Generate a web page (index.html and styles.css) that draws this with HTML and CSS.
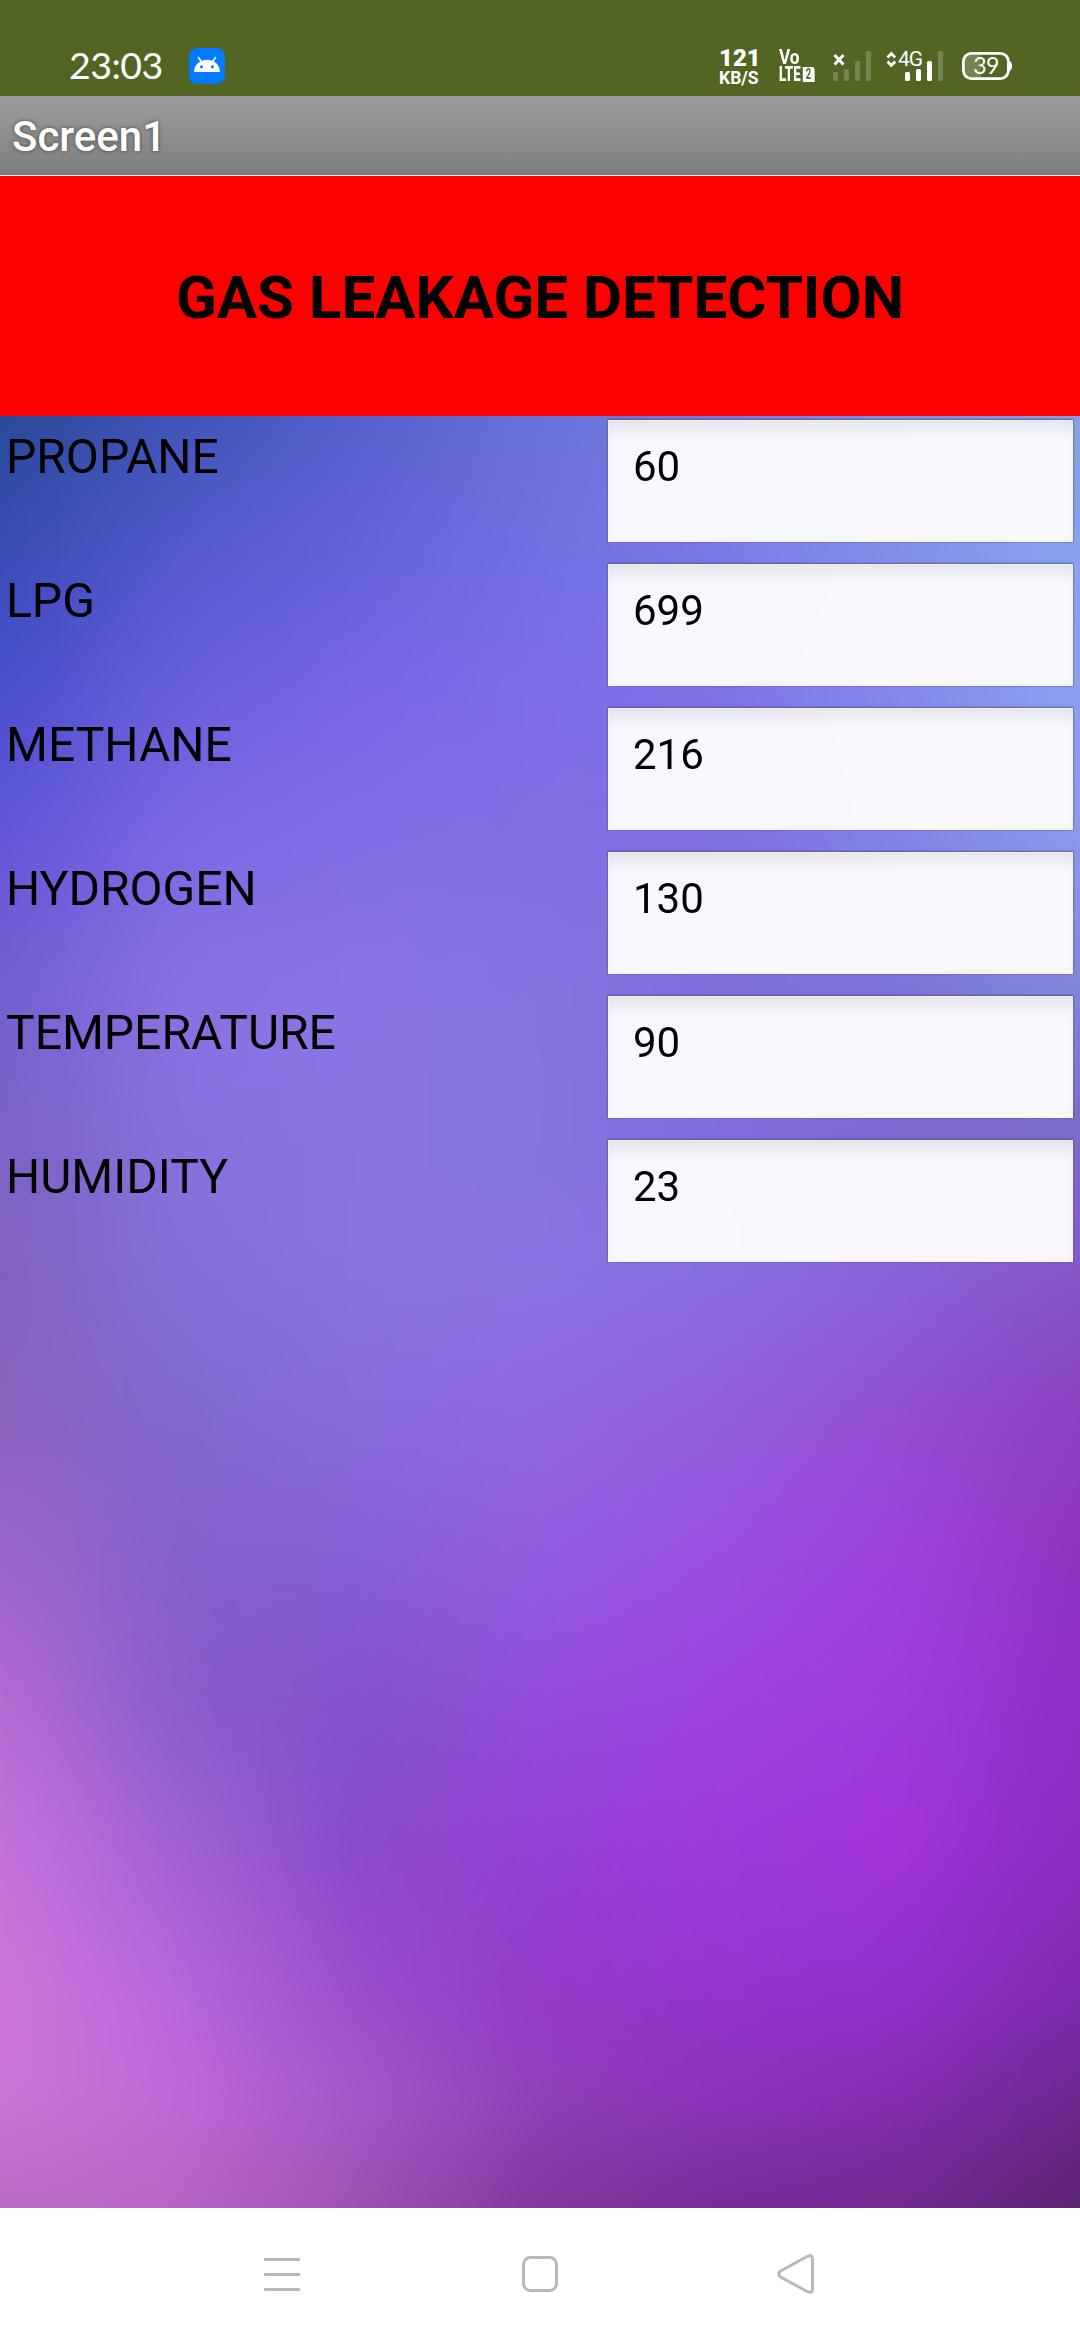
FILE: index.html
```html
<!DOCTYPE html>
<html lang="en">
<head>
<meta charset="utf-8">
<title>Screen1</title>
<link rel="stylesheet" href="styles.css">
</head>
<body>
<div class="phone">
  <header class="status">
    <span class="clock">23:03</span>
    <svg class="app-icon" width="36" height="36" viewBox="0 0 36 36">
      <rect width="36" height="36" rx="8.5" fill="#027bfd"/>
      <path d="M5 24a13 12.300 0 0 1 26 0z" fill="#fff"/>
      <path d="M9.500 9.500l4 6M26.500 9.500l-4 6" stroke="#fff" stroke-width="1.600" stroke-linecap="round"/>
      <circle cx="12.500" cy="18.800" r="1.500" fill="#027bfd"/><circle cx="23.500" cy="18.800" r="1.500" fill="#027bfd"/>
    </svg>
    <div class="speed"><b>121</b><span>KB/S</span></div>
    <div class="volte"><span>Vo</span><span>LTE<i>2</i></span></div>
    <svg class="sim1" width="38" height="32" viewBox="0 0 38 32">
      <g fill="#758551"><rect y="21" width="5" height="9" rx="1.500"/><rect x="11" y="18" width="5" height="12" rx="1.500"/><rect x="22" y="10" width="5" height="20" rx="1.500"/><rect x="33" width="5" height="30" rx="1.500"/></g>
      <path d="M1.500 4l9 9.500M10.500 4l-9 9.500" stroke="#fff" stroke-width="3"/>
    </svg>
    <div class="sim2">
      <svg width="57" height="32" viewBox="0 0 57 32">
        <path d="M1.500 6.500l3.800-4 3.800 4M1.500 10.500l3.800 4 3.800-4" fill="none" stroke="#fff" stroke-width="2.700"/>
        <g fill="#fff"><rect x="19" y="21" width="5" height="9" rx="1.500"/><rect x="30" y="18" width="5" height="12" rx="1.500"/><rect x="41" y="10" width="5" height="20" rx="1.500"/></g>
        <rect x="52" width="5" height="30" rx="1.500" fill="#758551"/>
      </svg>
      <span>4G</span>
    </div>
    <div class="battery">
      <svg width="50" height="28" viewBox="0 0 50 28">
        <path d="M3 8q0-5 6-5h10v22H9q-6 0-6-5z" fill="#758551"/>
        <rect x="1.400" y="1.400" width="45" height="25.200" rx="8" fill="none" stroke="#fff" stroke-width="2.800"/>
        <path d="M47 9q3 .5 3 5t-3 5z" fill="#fff"/>
      </svg>
      <span>39</span>
    </div>
  </header>

  <div class="titlebar">Screen1</div>
  <h1 class="banner">GAS LEAKAGE DETECTION</h1>

  <main class="screen">
    <div class="wash">
      <i class="band b0"></i><i class="band b1"></i><i class="band b2"></i><i class="band b3"></i><i class="band b4"></i>
      <i class="band b5"></i><i class="band b6"></i><i class="band b7"></i><i class="band b8"></i><i class="band b9"></i>
      <i class="band b10"></i><i class="band b11"></i><i class="band b12"></i><i class="band b13"></i>
    </div>
    <div class="rows">
      <div class="row"><span class="label">PROPANE</span><div class="field">60</div></div>
      <div class="row"><span class="label">LPG</span><div class="field">699</div></div>
      <div class="row"><span class="label">METHANE</span><div class="field">216</div></div>
      <div class="row"><span class="label">HYDROGEN</span><div class="field">130</div></div>
      <div class="row"><span class="label">TEMPERATURE</span><div class="field">90</div></div>
      <div class="row"><span class="label">HUMIDITY</span><div class="field">23</div></div>
    </div>
  </main>

  <nav class="nav">
    <svg width="36" height="44" viewBox="0 0 36 44"><g fill="#b8b8b8"><rect y="6" width="36" height="3" rx="1"/><rect y="21" width="36" height="3" rx="1"/><rect y="36" width="36" height="3" rx="1"/></g></svg>
    <svg width="36" height="36" viewBox="0 0 36 36"><rect x="1.500" y="1.500" width="33" height="33" rx="7" fill="none" stroke="#b8b8b8" stroke-width="3"/></svg>
    <svg width="38" height="40" viewBox="0 0 38 40"><path d="M3.200 17.200L30.500 2.300Q35.500 .2 35.500 5v30Q35.500 39.800 30.500 37.700L3.200 22.800Q0 20 3.200 17.200z" fill="none" stroke="#b8b8b8" stroke-width="3" stroke-linejoin="round"/></svg>
  </nav>
</div>
</body>
</html>
```
FILE: styles.css
```css
* { box-sizing: border-box; }
body { margin: 0; font-family: Roboto, sans-serif; color: #000; background: #fff; }
.phone { width: 1080px; height: 2340px; display: flex; flex-direction: column; overflow: hidden; }

.status { height: 96px; flex: none; display: flex; align-items: flex-start; background: #526522; color: #fff; padding-left: 69px; }
.clock { font: 400 37.5px/44px Lato, sans-serif; width: 120px; margin-top: 43px; letter-spacing: -.5px; }
.app-icon { margin-top: 48px; }
.speed { width: 60px; margin: 46px 0 0 494px; display: flex; flex-direction: column; font-weight: 700; }
.speed b { font-size: 24px; line-height: 24px; }
.speed span { font-size: 17.5px; line-height: 18px; margin-top: -1px; }
.volte { margin: 49px 0 0 0; width: 54px; display: flex; flex-direction: column; font: 700 20px/17px Roboto, sans-serif; }
.volte span { display: flex; align-items: center; height: 17px; transform: scaleX(.86); transform-origin: left; }
.volte span + span { font-weight: 900; transform: scaleX(.66); }
.volte i { font: 700 14px/15px Roboto, sans-serif; background: #fff; color: #526522; width: 18px; text-align: center; margin-left: 3px; border-top-right-radius: 4px; }
.sim1 { margin-top: 51px; }
.sim2 { margin: 51px 0 0 15px; display: grid; }
.sim2 svg, .sim2 span { grid-area: 1 / 1; }
.sim2 span { font: 400 21px/21px Roboto, sans-serif; padding-left: 12px; margin-top: -2px; letter-spacing: -1px; }
.battery { margin: 52px 0 0 19px; display: grid; }
.battery svg, .battery span { grid-area: 1 / 1; }
.battery span { font: 400 23px/27px Lato, sans-serif; width: 48px; text-align: center; letter-spacing: -.5px; }

.titlebar { height: 80px; flex: none; padding-left: 12px; color: #fff; font-weight: 500; font-size: 42px; line-height: 81px; background: linear-gradient(#9d9d9d, #7e7e7e); border-bottom: 1px solid #eee; text-shadow: 0 0 4px rgba(0, 0, 0, .5); }
.banner { height: 240px; flex: none; margin: 0; background: #f00; font-size: 60px; line-height: 243px; text-align: center; }

.screen { height: 1792px; flex: none; display: grid; grid-template-columns: 1080px; }
.wash, .rows { grid-area: 1 / 1; }
.wash { display: grid; }

/* Each band is a horizontal colour ramp that fades in over the one before it. */
.band { grid-area: 1 / 1; -webkit-mask-image: linear-gradient(transparent var(--from), #000 var(--to)); mask-image: linear-gradient(transparent var(--from), #000 var(--to)); }
.b0 { -webkit-mask-image: none; mask-image: none; background: linear-gradient(90deg, #294a94, #3f55b8, #5560cc, #6872d8, #7480dc, #7f93e0, #86a0e6); }
.b1 { --from: 0px; --to: 160px; background: linear-gradient(90deg, #3b4cba, #585ad0, #6a63dc, #756ee4, #7a7ae8, #838fec, #8aa2ee); }
.b2 { --from: 160px; --to: 290px; background: linear-gradient(90deg, #4b50ce, #6c60dc, #7a67e6, #7e6de8, #7f73e6, #8488ec, #8ca0f0); }
.b3 { --from: 290px; --to: 430px; background: linear-gradient(90deg, #6356d6, #7d69e4, #846de6, #8270e4, #8070e0, #8084e6, #8a9aec); }
.b4 { --from: 430px; --to: 570px; background: linear-gradient(90deg, #735fd0, #8a70e4, #8b74e4, #8674e0, #7f70dc, #7d74da, #8088d8); }
.b5 { --from: 570px; --to: 714px; background: linear-gradient(90deg, #7c62c6, #8871de, #8a74e0, #8674e0, #826cdc, #7f68d0, #7d6cc8); }
.b6 { --from: 714px; --to: 850px; background: linear-gradient(90deg, #8062bc, #846fda, #8a74e0, #8b74e2, #8870e0, #8664d8, #8658c8); }
.b7 { --from: 850px; --to: 984px; background: linear-gradient(90deg, #8862bc, #8069d0, #886ddc, #8f6ae0, #915fdc, #9250d4, #8842be); }
.b8 { --from: 984px; --to: 1134px; background: linear-gradient(90deg, #9c66c8, #8260cc, #8460d4, #925ce0, #9850e0, #9e42dc, #9034c0); }
.b9 { --from: 1134px; --to: 1284px; background: linear-gradient(90deg, #b46cd2, #885ccc, #8453cc, #924edc, #9f42e0, #a03ade, #9030c6); }
.b10 { --from: 1284px; --to: 1434px; background: linear-gradient(90deg, #c673dc, #a062d4, #884aca, #9340d4, #9e38dc, #a033da, #8e2cc0); }
.b11 { --from: 1434px; --to: 1584px; background: linear-gradient(90deg, #cf76dc, #b866dc, #9a4ecc, #9239c8, #9634cc, #9430cc, #7c2aac); }
.b12 { --from: 1584px; --to: 1684px; background: linear-gradient(90deg, #cc76d8, #bf68d8, #a458c8, #9040b8, #8c34bc, #842cb0, #6a288e); }
.b13 { --from: 1684px; --to: 1792px; background: linear-gradient(90deg, #b86ac0, #b664c4, #9d50b2, #80389c, #742c94, #702a8e, #5a2470); }

.rows { display: flex; flex-direction: column; -webkit-backdrop-filter: blur(26px); backdrop-filter: blur(26px); }
.row { height: 144px; display: grid; grid-template-columns: 602px 465px; padding: 4px 0 0 6px; }
.label { font-size: 48px; line-height: 56px; padding-top: 9px; }
.field { height: 122px; padding: 22px 0 0 25px; font-size: 42px; line-height: 50px; background: linear-gradient(rgba(238, 238, 240, .95), rgba(255, 255, 255, .95) 22px); box-shadow: 0 0 0 1px rgba(90, 90, 130, .35), 0 -1px 2px rgba(40, 40, 80, .4), inset 0 0 12px rgba(0, 0, 0, .035), inset 0 0 0 1px rgba(255, 255, 255, .5); }

.nav { height: 132px; flex: none; background: #fff; display: flex; align-items: center; padding-left: 264px; gap: 222px; }
.nav svg:last-child { margin-left: -3px; }
```
